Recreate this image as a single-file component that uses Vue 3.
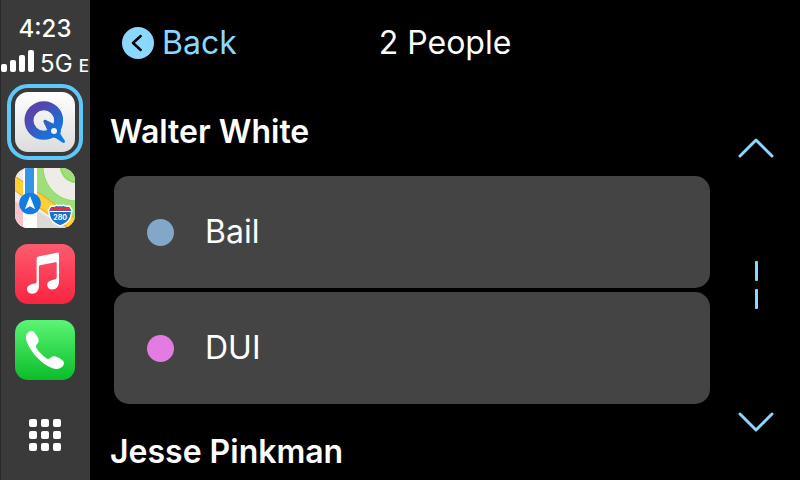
<script setup>
const signalBars = [8, 12, 17, 22]
const people = [
  {
    name: 'Walter White',
    cases: [
      { label: 'Bail', tone: 'blue' },
      { label: 'DUI', tone: 'pink' }
    ]
  },
  { name: 'Jesse Pinkman', cases: [] }
]
</script>

<template>
  <div class="screen">
    <aside class="dock">
      <div class="status">
        <time class="clock">4:23</time>
        <div class="network">
          <span class="signal">
            <i v-for="height in signalBars" :key="height" :style="{ height: height + 'px' }"></i>
          </span>
          <span class="carrier">5G</span>
          <span class="edge">E</span>
        </div>
      </div>

      <nav class="apps" aria-label="Apps">
        <button class="app q-app active" type="button" aria-label="Q">
          <svg viewBox="0 0 60 60">
            <defs>
              <linearGradient id="q-fill" gradientUnits="userSpaceOnUse" x1="14" y1="12" x2="48" y2="50">
                <stop offset="0.2" stop-color="#5546ad" />
                <stop offset="0.65" stop-color="#1f6dd4" />
                <stop offset="1" stop-color="#087de8" />
              </linearGradient>
            </defs>
            <circle cx="28.800" cy="28.500" r="14.800" fill="none" stroke="url(#q-fill)" stroke-width="9" />
            <path
              fill="url(#q-fill)"
              d="M28.600 30.300c-.8-1.800.6-3.200 2.400-2.400l10.500 5.300L46 38l-.6 4 4.300 6.400c1 1.800-.6 3.200-2.300 2.200L41 46.300l-5.200-1.500-2.400-4.400z"
            />
            <circle cx="39" cy="39" r="3" fill="#f0f1f4" />
          </svg>
        </button>

        <button class="app" type="button" aria-label="Maps">
          <svg viewBox="0 0 60 60">
            <rect width="60" height="60" fill="#eeebe6" />
            <path d="M21 0h39v60L21 32z" fill="#9fdf7b" />
            <path d="M28 0C29 18 42 32 60 33V15C52 14 46 8 45 0z" fill="#efebe7" />
            <path d="M45 0c1 8 7 14 15 15V0z" fill="#9fdf7b" />
            <path d="M46 0c1 7 6 13 14 14" fill="none" stroke="#83d65c" />
            <path d="M28 0C29 18 42 32 60 33" fill="none" stroke="#8bd765" />
            <path d="M0 33l10 6v21H0z" fill="#f9c2cb" />
            <path d="M22 43l30 17H22z" fill="#ddd9d4" />
            <path d="M-2 14l64 45" fill="none" stroke="#eda51d" stroke-width="13" />
            <path d="M-2 14l64 45" fill="none" stroke="#ffcf36" stroke-width="11" />
            <path d="M8 0h14v60H8z" fill="#fff" />
            <path d="M10 0h9v32h-9z" fill="#3494e6" />
            <circle cx="15" cy="35.500" r="10.800" fill="#147be0" />
            <path d="M15 28l5.200 13.200L15 38.300l-5.200 2.900z" fill="#fff" />
            <path
              d="M36 38c2.500.6 4.500.2 6-1 1.200 1 2.200 1 3.200.2 1 .8 2 .8 3.200-.2 1.500 1.200 3.500 1.600 6 1l2.600 4c-1.200 8-2 12.200-11.800 16C35.500 54.200 34.500 50 33.500 42z"
              fill="#1872c9"
              stroke="#fff"
              stroke-width="1.500"
            />
            <path d="M36 39.500c2.400.5 4.500 0 6-1 1.200.9 2.200.9 3.200.1 1 .8 2 .8 3.200-.1 1.500 1 3.600 1.500 6 1l1 3H35z" fill="#e92b3f" />
            <path d="M34.500 43.500h21.500" stroke="#fff" />
            <text class="shield" x="45.200" y="51.500" text-anchor="middle">280</text>
          </svg>
        </button>

        <button class="app music" type="button" aria-label="Music">
          <svg viewBox="0 0 60 60">
            <path
              fill="#fff"
              fill-rule="evenodd"
              d="M44 10.200c0-1.200-.7-1.800-1.900-1.500L23.400 12.500c-1.200.3-1.800.9-1.800 2.100v22.800c0 1.300-.7 1.900-2 2.200-4.500.8-7.600 2.300-7.600 5.700 0 2.600 2.200 4.400 4.900 4.400 4.600 0 7-3.400 7-8V22.900c0-1 .4-1.400 1.200-1.600l15.100-3.100c1-.2 1.500.1 1.500 1v14.100c0 1.300-.7 1.900-2 2.200-4.500.8-7.500 2.100-7.500 5.500 0 2.700 2.100 4.500 4.900 4.500 4.500 0 6.900-3.300 6.900-8z"
            />
          </svg>
        </button>

        <button class="app phone" type="button" aria-label="Phone">
          <svg viewBox="0 0 60 60">
            <path
              fill="#fff"
              d="M12.800 12.800c1.800-2 4.800-2.500 6.600-.3 2 2.400 4 5.300 4.300 7.600.2 2-1.200 3.500-2.400 5-.6.900-.5 1.900.1 2.900 3 4.500 6 7.600 10.400 10.400 1 .6 2 .6 2.900-.1 1.800-1.400 3.200-2.400 5.200-2 2.600.6 5.300 2.200 7.500 4 2.400 1.900 1.700 5-.4 6.700-2.500 2.100-5.700 2.500-9.500 1.300C27.500 44.900 15.600 32.500 11.700 21.500c-1.300-3.600-1.100-6.300 1.100-8.700z"
            />
          </svg>
        </button>
      </nav>

      <button class="home" type="button" aria-label="All apps">
        <i v-for="n in 9" :key="n"></i>
      </button>
    </aside>

    <main class="content">
      <header class="topbar">
        <button class="back" type="button">
          <svg viewBox="0 0 32 32" aria-hidden="true">
            <circle cx="16" cy="16" r="16" fill="#8ad8ff" />
            <path d="M18.700 9l-7.700 7 7.700 7" fill="none" stroke="#000" stroke-width="2.500" stroke-linecap="round" stroke-linejoin="round" />
          </svg>
          Back
        </button>
        <h1>2 People</h1>
      </header>

      <div class="body">
        <div class="list">
          <template v-for="person in people" :key="person.name">
            <h2>{{ person.name }}</h2>
            <button v-for="item in person.cases" :key="item.label" class="card" type="button">
              <span class="dot" :class="item.tone"></span>
              {{ item.label }}
            </button>
          </template>
        </div>

        <div class="scroller">
          <button class="arrow up" type="button" aria-label="Scroll up">
            <svg viewBox="0 0 36 20"><path d="M2 18L18 2l16 16" /></svg>
          </button>
          <div class="ticks"><i></i><i></i></div>
          <button class="arrow" type="button" aria-label="Scroll down">
            <svg viewBox="0 0 36 20"><path d="M2 2l16 16L34 2" /></svg>
          </button>
        </div>
      </div>
    </main>
  </div>
</template>

<style>
body {
  background: #000;
}
</style>

<style scoped>
.screen {
  display: flex;
  height: 100vh;
  overflow: hidden;
  background: #000;
  color: #fff;
  font-family: Inter, "Liberation Sans", sans-serif;
  font-size: 32px;
  line-height: 40px;
}

button {
  margin: 0;
  padding: 0;
  border: 0;
  background: none;
  color: inherit;
  font: inherit;
  text-align: left;
}

svg {
  display: block;
}

.dock {
  display: flex;
  flex: none;
  flex-direction: column;
  align-items: center;
  width: 90px;
  background: #3a3a3a;
  box-shadow: inset 1px 0 #292929;
}

.status {
  width: 100%;
  height: 92px;
}

.clock {
  display: block;
  padding-top: 12px;
  font-size: 24px;
  font-weight: 500;
  line-height: 34px;
  text-align: center;
}

.network {
  display: flex;
  align-items: baseline;
  justify-content: space-between;
  padding: 4px 1px 0;
  font-size: 24px;
  line-height: 26px;
}

.signal {
  display: flex;
  align-items: flex-end;
  gap: 3px;
}

.signal i {
  width: 6px;
  border-radius: 2px;
  background: #fff;
}

.edge {
  font-size: 17px;
  font-weight: 500;
}

.apps {
  display: flex;
  flex-direction: column;
  gap: 16px;
}

.app {
  width: 60px;
  height: 60px;
  border-radius: 13px;
}

.app svg {
  width: 60px;
  height: 60px;
  border-radius: 13px;
}

.active {
  outline: 4px solid #5fc8fb;
  outline-offset: 4px;
}

.q-app {
  background: linear-gradient(#fff, #dcdcdc);
}

.music {
  background: linear-gradient(#fd5b70, #fb2440);
}

.phone {
  background: linear-gradient(#5bf575, #0bbd29);
}

.shield {
  fill: #fff;
  font-size: 7px;
  font-weight: 700;
}

.home {
  display: grid;
  grid-template-columns: repeat(3, 8px);
  gap: 4px;
  margin-top: 39px;
}

.home i {
  height: 8px;
  border-radius: 2px;
  background: #fff;
}

.content {
  display: flex;
  flex: 1;
  flex-direction: column;
  min-width: 0;
}

.topbar {
  display: grid;
  flex: none;
  grid-template-columns: 1fr auto 1fr;
  align-items: center;
  box-sizing: border-box;
  height: 88px;
  padding: 0 32px 2px;
}

.back {
  display: flex;
  align-items: center;
  gap: 8px;
  color: #8ad8ff;
}

.back svg {
  width: 32px;
  height: 32px;
}

h1,
h2 {
  margin: 0;
  font-size: 32px;
  line-height: 40px;
}

h1 {
  font-weight: 400;
}

h2 {
  flex: none;
  padding: 24px 0;
  margin-left: -4px;
  font-weight: 600;
}

.body {
  display: flex;
  flex: 1;
  min-height: 0;
}

.list {
  display: flex;
  flex: 1;
  flex-direction: column;
  min-width: 0;
  padding-left: 24px;
  overflow: hidden;
}

.card {
  display: flex;
  flex: none;
  align-items: center;
  gap: 31px;
  height: 112px;
  padding: 0 33px;
  margin-bottom: 4px;
  border-radius: 15px;
  background: #444;
}

.dot {
  width: 27px;
  height: 27px;
  border-radius: 50%;
}

.blue {
  background: #82a7c9;
}

.pink {
  background: #e47be3;
}

.scroller {
  display: flex;
  flex: none;
  flex-direction: column;
  align-items: center;
  justify-content: space-between;
  box-sizing: border-box;
  width: 90px;
  padding: 50px 0 48px 2px;
}

.arrow svg {
  width: 36px;
  height: 20px;
}

.arrow path {
  fill: none;
  stroke: #8ad8ff;
  stroke-width: 3;
  stroke-linecap: round;
  stroke-linejoin: round;
}

.ticks {
  display: grid;
  gap: 8px;
}

.ticks i {
  width: 3px;
  height: 20px;
  border-radius: 1px;
  background: #8ad8ff;
}
</style>
